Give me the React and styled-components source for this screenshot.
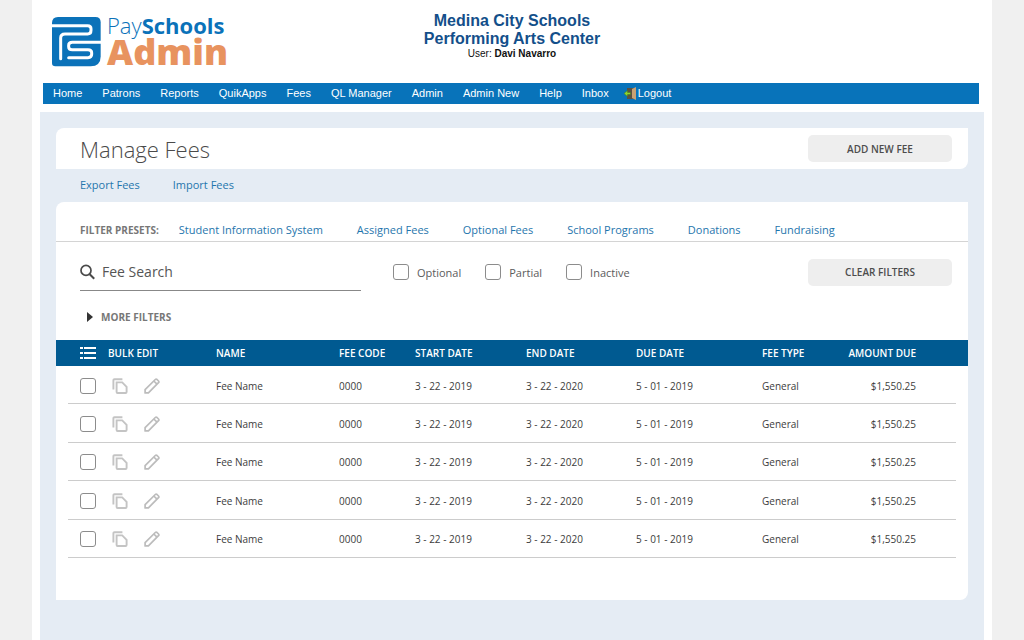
import React from 'react';
import styled, { createGlobalStyle } from 'styled-components';

const Global = createGlobalStyle`
  *, *::before, *::after { box-sizing: border-box; }
  html, body { margin: 0; background: #f0f0f0; }
  body, button, input { font-family: 'Open Sans', 'Noto Sans', sans-serif; }
  a { text-decoration: none; }
`;

const Page = styled.div`
  display: flex;
  flex-direction: column;
  min-height: 100vh;
  margin: 0 32px;
  background: #fff;
`;

const Header = styled.header`
  display: grid;
  grid-template-columns: 1fr auto 1fr;
  align-items: start;
  min-height: 83px;
  padding: 12px 20px 0;
`;

const Brand = styled.a`
  display: flex;
  gap: 6px;
  padding-top: 5px;
  color: #0b72b9;
`;

const BrandWords = styled.span`
  display: flex;
  flex-direction: column;
`;

const BrandTop = styled.span`
  font-size: 22px;
  line-height: 17px;
  font-weight: 300;

  strong { font-weight: 700; }
`;

const BrandBottom = styled.span`
  color: #e8935f;
  font-size: 36px;
  font-weight: 800;
  line-height: 36px;
`;

const School = styled.div`
  text-align: center;
  font-family: 'Liberation Sans', Arial, sans-serif;
  font-size: 10px;
  line-height: 12px;
  color: #111;
`;

const SchoolName = styled.h1`
  margin: 0;
  font-size: 16px;
  line-height: 18px;
  color: #134f8a;
`;

const Nav = styled.nav`
  display: flex;
  gap: 20px;
  height: 21px;
  margin: 0 13px 8px 11px;
  padding: 0 10px;
  background: #0873ba;
  font-family: 'Liberation Sans', Arial, sans-serif;
`;

const NavEnd = styled.div`
  display: flex;
  gap: 15px;
`;

const NavLink = styled.a`
  display: flex;
  align-items: center;
  gap: 1px;
  color: #fff;
  font-size: 11px;
  line-height: 20px;
  height: 20px;
  white-space: nowrap;
`;

const Main = styled.main`
  flex: 1;
  margin: 0 8px;
  padding: 16px 16px 40px;
  background: #e5ecf4;
`;

const TitleBar = styled.section`
  display: flex;
  align-items: center;
  justify-content: space-between;
  height: 41px;
  padding: 0 16px 0 24px;
  background: #fff;
  border-radius: 8px 0 8px 0;
`;

const Title = styled.h2`
  margin: 0;
  font-size: 22px;
  line-height: 40px;
  font-weight: 300;
  color: #4a4a4a;
`;

const GreyButton = styled.button`
  width: 144px;
  height: 27px;
  border: 0;
  border-radius: 5px;
  background: #eee;
  color: #4c4c4c;
  font-size: 10px;
  font-weight: 600;
`;

const LinkRow = styled.div`
  display: flex;
  gap: 33px;
  height: 33px;
  padding: 0 24px;
`;

const TextLink = styled.a`
  color: #1f76ad;
  font-size: 11px;
  line-height: 32px;
  white-space: nowrap;
`;

const Card = styled.section`
  background: #fff;
  border-radius: 8px 0 8px 0;
  padding-bottom: 42px;
`;

const Presets = styled.div`
  display: flex;
  gap: 34px;
  height: 40px;
  padding: 12px 24px 0;
  border-bottom: 1px solid #d4d4d4;
`;

const SmallLabel = styled.span`
  color: #777;
  font-size: 10px;
  font-weight: 700;
  line-height: ${(p) => p.$line}px;
  margin-right: ${(p) => p.$pull || 0}px;
  white-space: nowrap;
`;

const Filters = styled.form`
  display: flex;
  align-items: center;
  height: 60px;
  padding: 0 16px 0 24px;
`;

const SearchBox = styled.label`
  display: flex;
  align-items: center;
  gap: 7px;
  width: 281px;
  height: 38px;
  margin: 0 32px 0 0;
  border-bottom: 1px solid #888;
`;

const SearchInput = styled.input`
  flex: 1;
  min-width: 0;
  padding: 0;
  border: 0;
  outline: 0;
  background: transparent;
  color: #555;
  font-size: 14px;

  &::placeholder { color: #555; opacity: 1; }
`;

const Checks = styled.div`
  display: flex;
  flex: 1;
  gap: 24px;
`;

const CheckLabel = styled.label`
  display: flex;
  align-items: center;
  gap: 8px;
  color: #5c5c5c;
  font-size: 11px;
`;

const Tick = styled.input.attrs({ type: 'checkbox' })`
  appearance: none;
  width: 16px;
  height: 16px;
  margin: 0;
  border: 1px solid #8c8c8c;
  border-radius: 3px;
  background: #fff;

  &:checked { background: #005a91; }
`;

const MoreFilters = styled.button`
  display: flex;
  align-items: center;
  gap: 8px;
  height: 38px;
  padding: 0 0 8px 31px;
  border: 0;
  background: transparent;
`;

const TableArea = styled.div`
  padding: 0 12px;
`;

const Table = styled.table`
  width: 100%;
  height: 218px;
  border-collapse: separate;
  border-spacing: 0;
  table-layout: fixed;
  font-size: 10px;
  color: #3c3c3c;
`;

const Col = styled.col`
  width: ${(p) => (p.$w ? `${p.$w}px` : 'auto')};
`;

const Th = styled.th`
  height: 26px;
  padding: 0 ${(p) => (p.$end ? 40 : 0)}px 0 0;
  background: #005a91;
  color: #fff;
  font-weight: 600;
  text-align: ${(p) => (p.$end ? 'right' : 'left')};
  white-space: nowrap;

  &:first-child { box-shadow: -12px 0 0 #005a91; }
  &:last-child { box-shadow: 12px 0 0 #005a91; }
`;

const Td = styled.td`
  padding: 2px ${(p) => (p.$end ? 40 : 0)}px 0 0;
  border-bottom: 1px solid #ccc;
  text-align: ${(p) => (p.$end ? 'right' : 'left')};
  white-space: nowrap;
`;

const Tools = styled.div`
  display: flex;
  align-items: center;
  gap: ${(p) => p.$gap}px;
  padding-left: 12px;
`;

const IconButton = styled.button`
  display: flex;
  padding: 0;
  border: 0;
  background: transparent;
`;

const Logo = () => (
  <svg width="49" height="50" viewBox="0 0 147 150" aria-hidden="true">
    <path d="M18 0H130Q146 0 146 16V118Q146 148 116 148H10Q0 148 0 138V18Q0 0 18 0Z" fill="#0b72b9" />
    <g fill="none" stroke="#fff" strokeWidth="9">
      <path d="M0 26H107Q117 26 117 35V40Q117 51 107 51H39Q26 51 26 63V125" strokeLinecap="round" />
      <path d="M147 76H61Q50 76 50 85V89Q50 98 61 98H108Q119 98 119 107V112Q119 122 108 122H50" strokeLinecap="round" />
    </g>
  </svg>
);

const DoorIcon = () => (
  <svg width="13" height="13" viewBox="0 0 13 13" aria-hidden="true">
    <path d="M3 1h9v11H3z" fill="#5b5142" />
    <path d="M8 2l4-2v13l-4-2z" fill="#c9a275" />
    <path d="M0 6.5L3.5 3.4v2h3v2.2h-3v2z" fill="#8ed32f" stroke="#3f7d1c" strokeWidth=".5" />
  </svg>
);

const SearchIcon = () => (
  <svg width="15" height="16" viewBox="0 0 15 16" fill="none" stroke="#4a4a4a" aria-hidden="true">
    <circle cx="6" cy="6.4" r="5" strokeWidth="1.7" />
    <path d="M9.7 10.2l4.5 4.6" strokeWidth="2" />
  </svg>
);

const ListIcon = () => (
  <svg width="16" height="12" viewBox="0 0 16 12" fill="#fff" aria-hidden="true">
    {[0, 5, 10].map((y) => (
      <g key={y}>
        <rect x="0" y={y} width="3" height="2" />
        <rect x="4" y={y} width="12" height="2" />
      </g>
    ))}
  </svg>
);

const CopyIcon = () => (
  <svg width="16" height="16" viewBox="0 0 16 16" fill="none" stroke="#c4c4c4" strokeWidth="1.9" aria-hidden="true">
    <path d="M1.4 11.5V2.3Q1.4 1.2 2.5 1.2H10.4" />
    <path d="M4.6 4.4H10.2L14.6 8.8V14Q14.6 15 13.6 15H5.6Q4.6 15 4.6 14Z" />
  </svg>
);

const PencilIcon = () => (
  <svg width="16" height="16" viewBox="0 0 16 16" fill="none" stroke="#bcbcbc" strokeWidth="1.7" strokeLinejoin="round" aria-hidden="true">
    <path d="M1.1 14.9V11.6L11.3 1.5Q12.1.7 13 1.5L14.5 3Q15.3 3.9 14.5 4.7L4.4 14.9Z" />
    <path d="M9.8 3L13 6.2" />
  </svg>
);

const Triangle = () => (
  <svg width="6" height="10" viewBox="0 0 6 10" aria-hidden="true">
    <path d="M0 0L6 5L0 10Z" fill="#333" />
  </svg>
);

const menu = ['Home', 'Patrons', 'Reports', 'QuikApps', 'Fees', 'QL Manager', 'Admin', 'Admin New', 'Help'];
const presets = ['Student Information System', 'Assigned Fees', 'Optional Fees', 'School Programs', 'Donations', 'Fundraising'];
const widths = [148, 0, 76, 111, 110, 126, 80, 114];
const heads = ['NAME', 'FEE CODE', 'START DATE', 'END DATE', 'DUE DATE', 'FEE TYPE', 'AMOUNT DUE'];
const fee = ['Fee Name', '0000', '3 - 22 - 2019', '3 - 22 - 2020', '5 - 01 - 2019', 'General', '$1,550.25'];
const rows = [1, 2, 3, 4, 5];

export default function App() {
  return (
    <>
      <Global />
      <Page>
        <Header>
          <Brand href="#home">
            <Logo />
            <BrandWords>
              <BrandTop>Pay<strong>Schools</strong></BrandTop>
              <BrandBottom>Admin</BrandBottom>
            </BrandWords>
          </Brand>
          <School>
            <SchoolName>Medina City Schools<br />Performing Arts Center</SchoolName>
            User: <strong>Davi Navarro</strong>
          </School>
        </Header>
        <Nav>
          {menu.map((m) => <NavLink key={m} href="#menu">{m}</NavLink>)}
          <NavEnd>
            <NavLink href="#inbox">Inbox</NavLink>
            <NavLink href="#logout"><DoorIcon />Logout</NavLink>
          </NavEnd>
        </Nav>
        <Main>
          <TitleBar>
            <Title>Manage Fees</Title>
            <GreyButton type="button">ADD NEW FEE</GreyButton>
          </TitleBar>
          <LinkRow>
            <TextLink href="#export">Export Fees</TextLink>
            <TextLink href="#import">Import Fees</TextLink>
          </LinkRow>
          <Card>
            <Presets>
              <SmallLabel $line={32} $pull={-14}>FILTER PRESETS:</SmallLabel>
              {presets.map((p) => <TextLink key={p} href="#preset">{p}</TextLink>)}
            </Presets>
            <Filters>
              <SearchBox>
                <SearchIcon />
                <SearchInput type="search" placeholder="Fee Search" aria-label="Fee Search" />
              </SearchBox>
              <Checks>
                {['Optional', 'Partial', 'Inactive'].map((c) => (
                  <CheckLabel key={c}><Tick />{c}</CheckLabel>
                ))}
              </Checks>
              <GreyButton type="button">CLEAR FILTERS</GreyButton>
            </Filters>
            <MoreFilters type="button">
              <Triangle />
              <SmallLabel $line={16}>MORE FILTERS</SmallLabel>
            </MoreFilters>
            <TableArea>
              <Table>
                <colgroup>{widths.map((w, i) => <Col key={i} $w={w} />)}</colgroup>
                <thead>
                  <tr>
                    <Th scope="col"><Tools $gap={12}><ListIcon />BULK EDIT</Tools></Th>
                    {heads.map((h, i) => <Th key={h} scope="col" $end={i === 6}>{h}</Th>)}
                  </tr>
                </thead>
                <tbody>
                  {rows.map((r) => (
                    <tr key={r}>
                      <Td>
                        <Tools $gap={16}>
                          <Tick aria-label={`Select fee ${r}`} />
                          <IconButton type="button" aria-label="Copy fee"><CopyIcon /></IconButton>
                          <IconButton type="button" aria-label="Edit fee"><PencilIcon /></IconButton>
                        </Tools>
                      </Td>
                      {fee.map((v, i) => <Td key={i} $end={i === 6}>{v}</Td>)}
                    </tr>
                  ))}
                </tbody>
              </Table>
            </TableArea>
          </Card>
        </Main>
      </Page>
    </>
  );
}
